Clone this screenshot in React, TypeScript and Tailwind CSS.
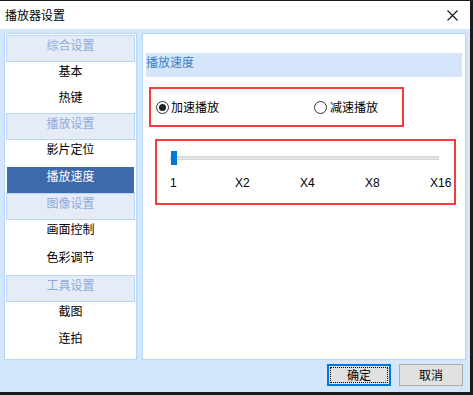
const cn = "font-['Noto_Sans_CJK_SC','Microsoft_YaHei',sans-serif]";

type Group = { title: string; items: string[]; rowH: string };

// rows grow a little from group to group in the original
const groups: Group[] = [
  { title: "综合设置", items: ["基本", "热键"], rowH: "h-[25.5px]" },
  { title: "播放设置", items: ["影片定位", "播放速度"], rowH: "h-[26.5px]" },
  { title: "图像设置", items: ["画面控制", "色彩调节"], rowH: "h-[27.5px]" },
  { title: "工具设置", items: ["截图", "连拍"], rowH: "h-[26.5px]" },
];

const selected = "播放速度";

function Radio({ checked }: { checked?: boolean }) {
  return (
    <span className="w-[13px] h-[13px] rounded-full border border-[#333] bg-white flex items-center justify-center shrink-0">
      {checked && <span className="w-[7px] h-[7px] rounded-full bg-[#222]" />}
    </span>
  );
}

export default function App() {
  return (
    <div className={`w-[473px] h-[395px] bg-[#1b1b1b] flex flex-col text-[12px] text-black ${cn}`}>
      <div className="h-px" />
      <div className="w-[470px] h-[391px] flex flex-col">
        {/* title bar */}
        <div className="h-[28px] bg-white flex items-center justify-between pl-[5px] pr-[12px]">
          <span className="leading-[16px]">播放器设置</span>
          <svg width="11" height="11" viewBox="0 0 11 11">
            <path d="M0.5 0.5 L10.5 10.5 M10.5 0.5 L0.5 10.5" stroke="#111" strokeWidth="1.1" />
          </svg>
        </div>

        {/* body */}
        <div className="flex-1 bg-[#d4e6fc] flex flex-col px-[4px] pt-[4px]">
          <div className="flex gap-[5px] h-[327px]">
            {/* left nav */}
            <div className="w-[133px] border border-[#b7d5f7] bg-white p-px flex flex-col">
              {groups.map((g) => (
                <div key={g.title} className="flex flex-col">
                  <div className="h-[27px] border border-[#b7d5f7] bg-[#e5ecf8] text-[#8eaadc] text-center leading-[16px] pt-[1px]">
                    {g.title}
                  </div>
                  {g.items.map((it) => (
                    <div
                      key={it}
                      className={`${g.rowH} mx-[1px] text-center leading-[16px] pt-[1px] ${
                        it === selected ? "bg-[#3d69ad] text-white" : ""
                      }`}
                    >
                      {it}
                    </div>
                  ))}
                </div>
              ))}
            </div>

            {/* right content */}
            <div className="flex-1 border border-[#b7d5f7] bg-white flex flex-col">
              <div className="mt-[19px] mx-[3px] h-[24px] bg-[#d4e4fb] text-[#3b80c6] leading-[16px] pt-[1px]">
                播放速度
              </div>

              <div className="mt-[10px] ml-[6px] w-[255px] h-[40px] border-2 border-[#f53b3b] flex items-center pl-[5px]">
                <label className="w-[158px] flex items-center gap-[2px]">
                  <Radio checked />
                  <span className="leading-[16px]">加速播放</span>
                </label>
                <label className="flex items-center gap-[3px]">
                  <Radio />
                  <span className="leading-[16px]">减速播放</span>
                </label>
              </div>

              <div className="mt-[12px] ml-[12px] w-[301px] h-[66px] border-2 border-[#f53b3b] flex flex-col">
                <div className="relative ml-[13px] mt-[10px] w-[269px] h-[14px]">
                  <div className="absolute left-0 right-0 top-[5px] h-[4px] bg-[#e3e3e3] border border-[#d6d6d6]" />
                  <div className="absolute left-px top-0 w-[6px] h-[14px] bg-[#0078d7]" />
                </div>
                <div className="ml-[13px] mt-[10px] flex font-['Liberation_Sans',Arial,sans-serif] leading-[16px]">
                  <span className="w-[65px]">1</span>
                  <span className="w-[65px]">X2</span>
                  <span className="w-[65px]">X4</span>
                  <span className="w-[65px]">X8</span>
                  <span>X16</span>
                </div>
              </div>
            </div>
          </div>

          {/* buttons */}
          <div className="flex justify-end gap-[8px] mt-[4px] pr-[3px]">
            <button className="w-[64px] h-[22px] bg-[#e1e1e1] border-2 border-[#0078d7] flex items-center justify-center outline-dotted outline-1 outline-black outline-offset-[-4px] leading-[16px]">
              确定
            </button>
            <button className="w-[64px] h-[22px] bg-[#e1e1e1] border border-[#adadad] flex items-center justify-center leading-[16px]">
              取消
            </button>
          </div>
        </div>
      </div>
    </div>
  );
}
